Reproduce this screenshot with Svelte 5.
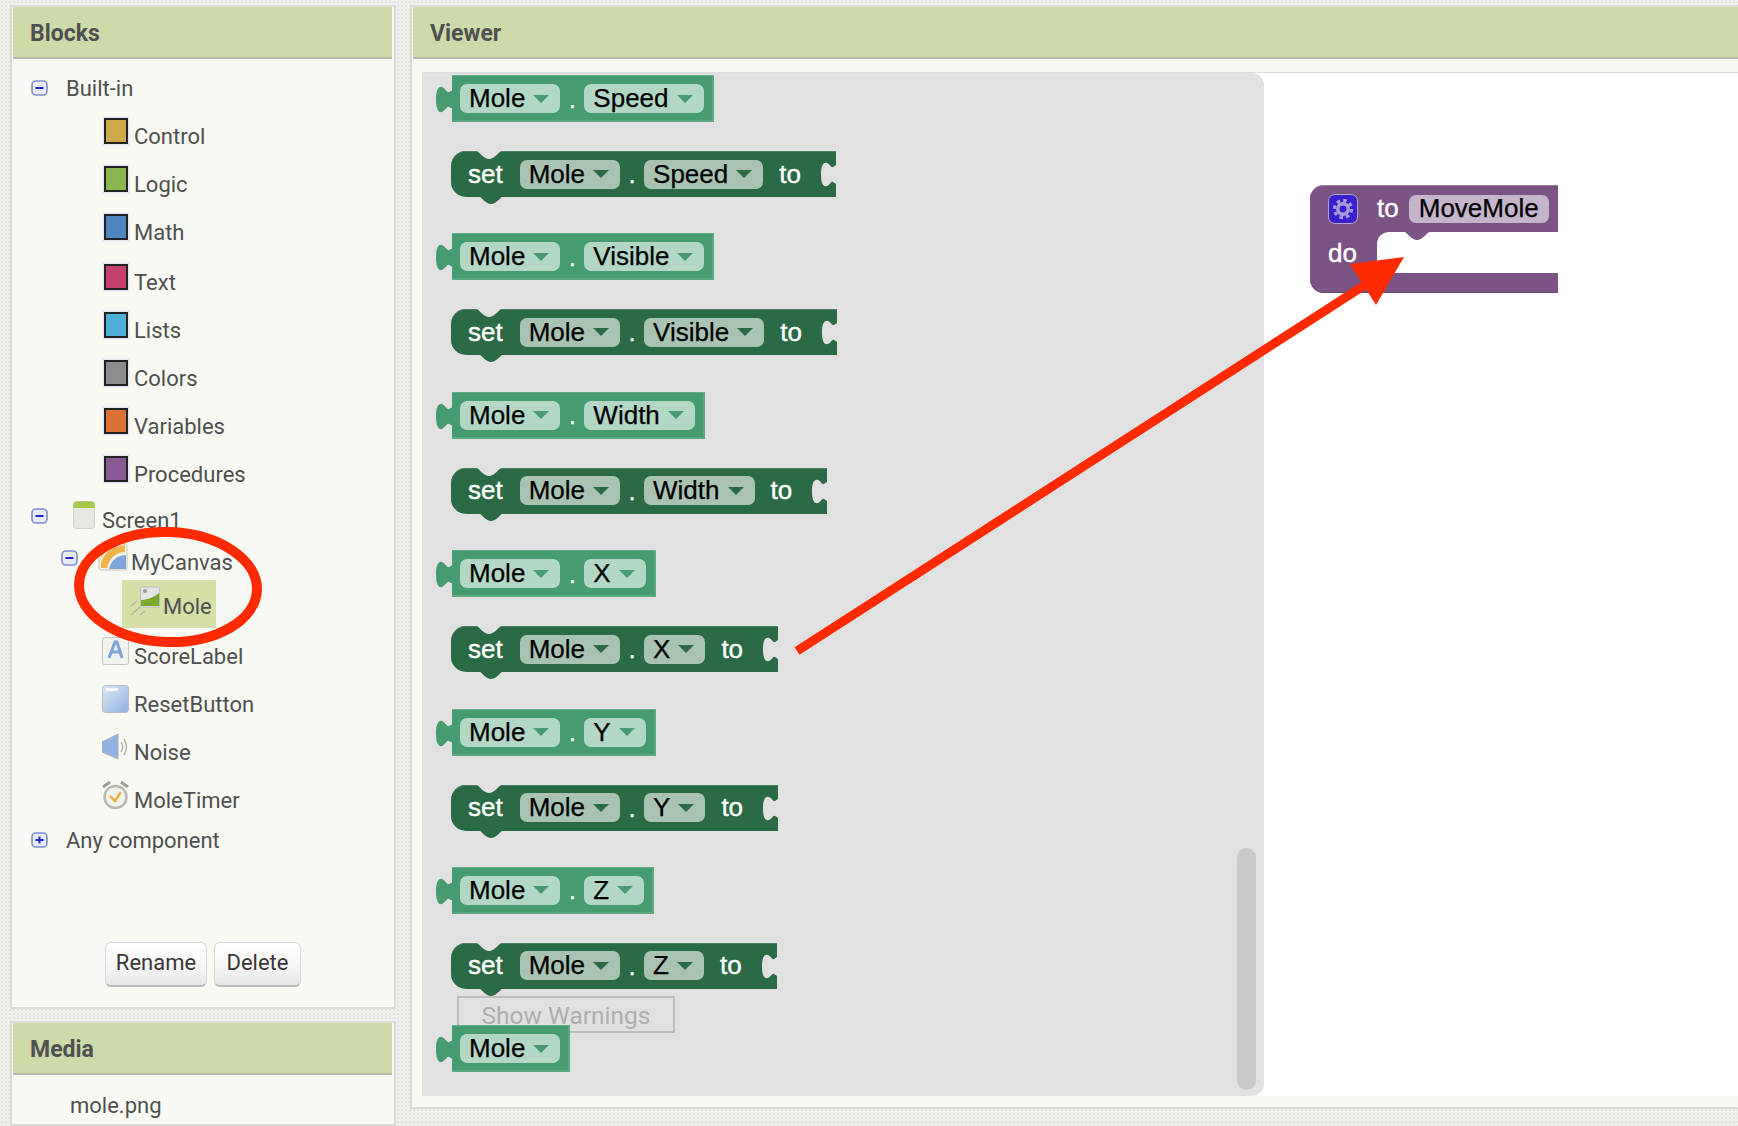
<script>
  const builtins = [
    { name: 'Control', color: '#cfa94a' },
    { name: 'Logic', color: '#8ab54f' },
    { name: 'Math', color: '#4f86c0' },
    { name: 'Text', color: '#c43f6e' },
    { name: 'Lists', color: '#4bafd8' },
    { name: 'Colors', color: '#8c8c8c' },
    { name: 'Variables', color: '#dc7134' },
    { name: 'Procedures', color: '#8a5a96' }
  ];
  const props = ['Speed', 'Visible', 'Width', 'X', 'Y', 'Z'];
</script>

{#snippet toggle(kind)}
  <svg class="toggle" width="17" height="16" viewBox="0 0 17 16">
    <rect x="1" y="1" width="15" height="14" rx="4" fill="#e8ebf8" stroke="#7f8bd0" stroke-width="1.6" />
    <path d="M4.5 8h8" stroke="#2323c8" stroke-width="2" />
    {#if kind === 'plus'}<path d="M8.5 4.5v7" stroke="#2323c8" stroke-width="2" />{/if}
  </svg>
{/snippet}

{#snippet field(text)}
  <span class="field">{text}<i class="caret"></i></span>
{/snippet}

{#snippet getter(prop)}
  <div class="block get">
    <svg class="tab" width="17" height="27" viewBox="0 0 17 27">
      <path d="M17 4 L13 6 C11 7 10 3 6 1 C2 0 0 5 0 13.5 C0 22 2 27 6 26 C10 24 11 20 13 21 L17 23 Z" fill="#469c70" />
    </svg>
    {@render field('Mole')}
    {#if prop}
      <span class="dot">.</span>
      {@render field(prop)}
    {/if}
  </div>
{/snippet}

{#snippet setter(prop)}
  <div class="block set">
    <svg class="notch" width="30" height="9" viewBox="0 0 30 9">
      <path d="M0 0 L3 0 C6 2 10 8 15 8 C20 8 24 2 27 0 L30 0 Z" fill="#e1e1e1" />
    </svg>
    <svg class="bump" width="30" height="9" viewBox="0 0 30 9">
      <path d="M0 0 L3 0 C6 2 10 8 15 8 C20 8 24 2 27 0 L30 0 Z" fill="#2a6a45" />
    </svg>
    <span class="word">set</span>
    {@render field('Mole')}
    <span class="dot">.</span>
    {@render field(prop)}
    <span class="word to">to</span>
    <svg class="socket" width="15" height="25" viewBox="0 0 15 25">
      <path d="M15 3 L12 5 C10 6 9 2 6 1 C2 0 0 4 0 12.5 C0 21 2 25 6 24 C9 23 10 19 12 20 L15 22 Z" fill="#e1e1e1" />
    </svg>
  </div>
{/snippet}

<div class="page">
  <div class="side">
    <section class="panel blocks">
      <h2>Blocks</h2>
      <div class="body">
        <div class="tree">
          <div class="row top">{@render toggle('minus')}<span class="lbl">Built-in</span></div>
          {#each builtins as b}
            <div class="row item">
              <span class="swatch" style="background:{b.color}"></span>
              <span class="lbl">{b.name}</span>
            </div>
          {/each}
          <div class="row top screen">
            {@render toggle('minus')}
            <svg class="ico" width="22" height="28" viewBox="0 0 22 28">
              <rect x=".5" y=".5" width="21" height="27" rx="3" fill="#e6e6e3" stroke="#cfcfcb" />
              <path d="M.5 7V3.500a3 3 0 0 1 3-3h15a3 3 0 0 1 3 3V7z" fill="#a6c64a" />
            </svg>
            <span class="lbl">Screen1</span>
          </div>
          <div class="row canvas">
            {@render toggle('minus')}
            <svg class="ico" width="30" height="28" viewBox="0 0 30 28">
              <rect x="1" y="1" width="28" height="26" rx="2" fill="#f3f0e2" stroke="#c9c9c9" />
              <path d="M3 19 C7 9 14 4 27 2 L27 9 C18 9 12 14 9 25 L3 25 Z" fill="#f0b34a" />
              <path d="M8 5 C4 7 3 11 3 15 C6 10 9 7 13 5 Z" fill="#a8c65a" />
              <path d="M11 26 C13 17 20 12 28 12 L28 26 Z" fill="#7fa6d8" />
            </svg>
            <span class="lbl">MyCanvas</span>
          </div>
          <div class="row mole">
            <svg class="ico" width="30" height="31" viewBox="0 0 30 31">
              <rect x="10.500" y="1" width="19" height="20" rx="1" fill="#e4e4e4" stroke="#bdbdbd" />
              <path d="M11 20 L11 14 C17 14 22 12 29 7 L29 20 Z" fill="#7aa92b" />
              <circle cx="15" cy="5" r="2" fill="#9a9a9a" />
              <path d="M1 20 L7 15 M1 29 L10 21 M10 29 L15 25" stroke="#b3b3a8" stroke-width="1.600" />
            </svg>
            <span class="lbl">Mole</span>
          </div>
          <div class="row item score">
            <svg class="ico" width="27" height="28" viewBox="0 0 27 28">
              <rect x=".5" y=".5" width="26" height="27" rx="2" fill="#f1f1ee" stroke="#c6c6c6" />
              <path d="M7 21 L13 5 L15 5 L20 21 M9 15 H18" fill="none" stroke="#7fa3d6" stroke-width="3" />
            </svg>
            <span class="lbl">ScoreLabel</span>
          </div>
          <div class="row item">
            <svg class="ico" width="27" height="28" viewBox="0 0 27 28">
              <defs>
                <linearGradient id="btn" x1="0" y1="0" x2="1" y2="1">
                  <stop offset="0" stop-color="#dfe9f8" />
                  <stop offset="1" stop-color="#8fb0e0" />
                </linearGradient>
              </defs>
              <rect x=".5" y=".5" width="26" height="27" rx="3" fill="url(#btn)" stroke="#b9bcc0" />
              <rect x="4" y="3" width="12" height="3" fill="#f4f7fc" />
            </svg>
            <span class="lbl">ResetButton</span>
          </div>
          <div class="row item">
            <svg class="ico" width="27" height="26" viewBox="0 0 27 26">
              <path d="M0 8 L16 0 V25 L0 18 Z" fill="#8fb2e2" stroke="#a7aeb8" />
              <path d="M19 8 C21 11 21 15 19 18 M22 5 C25 10 25 16 22 21" fill="none" stroke="#b5b5ad" stroke-width="1.500" />
            </svg>
            <span class="lbl">Noise</span>
          </div>
          <div class="row item">
            <svg class="ico" width="27" height="28" viewBox="0 0 27 28">
              <path d="M1 6 L8 1 M26 6 L19 1" stroke="#9b9b97" stroke-width="3" />
              <circle cx="13.500" cy="16" r="11" fill="#f2f2ec" stroke="#b9b9b3" stroke-width="2.500" />
              <path d="M8 15 L13 20 L19 11" fill="none" stroke="#ecb14a" stroke-width="2.500" />
            </svg>
            <span class="lbl">MoleTimer</span>
          </div>
          <div class="row top any">{@render toggle('plus')}<span class="lbl">Any component</span></div>
        </div>
        <div class="actions">
          <button class="rename">Rename</button>
          <button class="delete">Delete</button>
        </div>
      </div>
    </section>
    <section class="panel media">
      <h2>Media</h2>
      <div class="body"><span class="lbl file">mole.png</span></div>
    </section>
  </div>

  <section class="panel viewer">
    <h2>Viewer</h2>
    <div class="body">
      <div class="workspace">
        <div class="flyout">
          <button class="warnings">Show Warnings</button>
          {#each props as p}
            {@render getter(p)}
            {@render setter(p)}
          {/each}
          {@render getter(null)}
          <div class="scrollbar"></div>
        </div>

        <div class="proc">
          <div class="proc-head">
            <span class="gear">
              <svg width="24" height="24" viewBox="0 0 22 22">
                <circle cx="11" cy="11" r="7.800" fill="none" stroke="#a99bd8" stroke-width="3" stroke-dasharray="3.200 2.920" />
                <circle cx="11" cy="11" r="4.800" fill="none" stroke="#a99bd8" stroke-width="3.200" />
              </svg>
            </span>
            <span class="word">to</span>
            <span class="name">MoveMole</span>
          </div>
          <span class="word do">do</span>
          <div class="slot">
            <svg class="slot-notch" width="30" height="9" viewBox="0 0 30 9">
              <path d="M0 0 L3 0 C6 2 10 8 15 8 C20 8 24 2 27 0 L30 0 Z" fill="#7c5385" />
            </svg>
          </div>
        </div>
      </div>
    </div>
  </section>

  <svg class="marks" width="1738" height="1126" viewBox="0 0 1738 1126">
    <ellipse cx="168" cy="587" rx="89" ry="55" fill="none" stroke="#ff2a00" stroke-width="10" transform="rotate(2 168 587)" />
    <path d="M797 651 L1368 283" stroke="#ff2a00" stroke-width="9" />
    <path d="M1404 257 L1350 264 L1376 305 Z" fill="#ff2a00" />
  </svg>
</div>

<style>
  :global(body) {
    margin: 0;
    background: #eeeeeb;
  }

  .page {
    position: relative;
    width: 1738px;
    height: 1126px;
    overflow: hidden;
    display: flex;
    gap: 14px;
    padding: 5px 0 0 10px;
    box-sizing: border-box;
    font-family: Roboto, "Liberation Sans", sans-serif;
    color: #4f4f4f;
    background-color: #eeeeeb;
    background-image: radial-gradient(#e3e3e0 1px, transparent 1.2px);
    background-size: 4px 4px;
  }

  .side {
    width: 386px;
    flex: none;
    display: flex;
    flex-direction: column;
    gap: 12px;
  }

  .panel {
    box-sizing: border-box;
    background: #f8f9f3;
    border: 2px solid #d9d9d6;
    display: flex;
    flex-direction: column;
  }

  h2 {
    flex: none;
    margin: 0 2px 0 1px;
    height: 52px;
    box-sizing: border-box;
    padding: 2px 0 0 17px;
    display: flex;
    align-items: center;
    background: #cddba9;
    border-bottom: 2px solid #b8b9a8;
    font-size: 23px;
    font-weight: 700;
    color: #505050;
  }

  .blocks {
    height: 1004px;
    flex: none;
  }

  .blocks .body {
    flex: 1;
    display: flex;
    flex-direction: column;
  }

  .tree {
    padding-top: 5px;
  }

  .row {
    height: 48px;
    display: flex;
    align-items: center;
  }

  .lbl {
    font-size: 22px;
    white-space: nowrap;
  }

  .toggle {
    flex: none;
  }

  .top {
    padding-left: 19px;
  }

  .top > .lbl {
    margin-left: 18px;
  }

  .item {
    padding-left: 90px;
  }

  .item:nth-child(5) {
    margin-top: 2px;
  }

  .item .lbl {
    margin-left: 5px;
  }

  .swatch {
    width: 20px;
    height: 22px;
    margin: 0 0 10px 2px;
    border: 2px solid #222;
    box-shadow: 0 0 0 1.500px #e4e7f3;
  }

  .ico {
    flex: none;
    margin-bottom: 10px;
  }

  .item .swatch + .lbl {
    margin-left: 6px;
  }

  .screen {
    margin-top: -2px;
  }

  .screen .toggle,
  .canvas .toggle {
    margin-bottom: 8px;
  }

  .screen .ico {
    margin-left: 25px;
  }

  .top.screen .lbl {
    margin-left: 7px;
  }

  .canvas {
    height: 36px;
    padding-left: 49px;
  }

  .canvas .ico {
    margin-left: 20px;
  }

  .canvas .lbl {
    margin-left: 3px;
  }

  .mole {
    margin-left: 110px;
    width: 94px;
    box-sizing: border-box;
    padding: 4px 0 0 8px;
    background: #d5e0a6;
  }

  .mole .lbl {
    margin-left: 3px;
  }

  .score {
    margin-top: 4px;
  }

  .any {
    height: 32px;
  }

  .actions {
    margin-top: auto;
    padding-bottom: 20px;
    display: flex;
    justify-content: center;
    gap: 7px;
  }

  button {
    font-family: Roboto, "Liberation Sans", sans-serif;
  }

  .actions button {
    height: 45px;
    padding: 0 0 3px;
    font-size: 22px;
    color: #3b3535;
    border: 1px solid #d8d8d8;
    border-bottom: 2px solid #b9b9b9;
    border-radius: 6px;
    background: linear-gradient(#ffffff, #f6f6f6 55%, #e6e6e6);
  }

  .rename {
    width: 102px;
  }

  .delete {
    width: 87px;
  }

  .media {
    flex: 1;
  }

  .file {
    display: block;
    padding: 18px 0 0 58px;
  }

  .viewer {
    flex: none;
    width: 1340px;
    height: 1104px;
  }

  .viewer .body {
    flex: 1;
    min-height: 0;
    padding: 13px 0 11px 10px;
    display: flex;
  }

  .workspace {
    position: relative;
    flex: 1;
    background: #fff;
    border-top: 1px solid #dcdcdc;
  }

  .flyout {
    position: relative;
    width: 842px;
    height: 100%;
    box-sizing: border-box;
    padding: 2px 0 0 30px;
    background: #e1e1e1;
    border-radius: 0 12px 12px 0;
    overflow: hidden;
  }

  .block {
    position: relative;
    width: max-content;
    display: flex;
    align-items: center;
    font-family: "Liberation Sans", Arial, sans-serif;
    font-size: 26px;
    color: #000;
    -webkit-text-stroke: 0.25px currentColor;
  }

  .get {
    height: 47px;
    margin-bottom: 29px;
    padding: 0 10px 0 8px;
    background: #469c70;
    box-shadow: inset 0 1px #62ad87, inset 0 -2px #5aa880, inset -2px 0 #5aa880;
  }

  .set {
    height: 46px;
    margin-bottom: 36.400px;
    margin-left: -1px;
    padding: 0 35px 0 17px;
    background: #2a6a45;
    border-radius: 15px 0 0 15px;
    box-shadow: inset 0 1px #4b8163;
  }

  .tab {
    position: absolute;
    left: -16px;
    top: 11px;
  }

  .notch {
    position: absolute;
    left: 23px;
    top: 0;
  }

  .bump {
    position: absolute;
    left: 25px;
    bottom: -8px;
  }

  .socket {
    position: absolute;
    right: 0;
    top: 11px;
  }

  .field {
    height: 29px;
    display: flex;
    align-items: center;
    padding: 0 11px 0 9px;
    border-radius: 7px;
  }

  .get .field {
    background: #b3d7c5;
  }

  .set .field {
    background: #a9c3b3;
  }

  .caret {
    width: 0;
    height: 0;
    margin-left: 8px;
    border: 8.500px solid transparent;
    border-bottom: 0;
    border-top-width: 8px;
    border-top-color: #469c70;
  }

  .set .caret {
    border-top-color: #2a6a45;
  }

  .dot {
    width: 24px;
    text-align: center;
    color: #fff;
    margin-top: 1px;
  }

  .word {
    font-family: "Liberation Sans", Arial, sans-serif;
    color: #fff;
    -webkit-text-stroke: 0.4px #fff;
  }

  .set .word {
    margin-right: 17px;
  }

  .set .to {
    margin: 0 0 0 16px;
  }

  .warnings {
    position: absolute;
    left: 35px;
    top: 923px;
    width: 218px;
    height: 37px;
    padding: 2px 0 0;
    font-size: 24.500px;
    color: #aeaeae;
    background: transparent;
    border: 2px solid #bdbdbd;
  }

  .scrollbar {
    position: absolute;
    left: 815px;
    top: 775px;
    width: 19px;
    height: 242px;
    border-radius: 10px;
    background: #c9c9c9;
  }

  .proc {
    position: absolute;
    left: 888px;
    top: 112px;
    width: 248px;
    height: 108px;
    box-sizing: border-box;
    font-family: "Liberation Sans", Arial, sans-serif;
    font-size: 26px;
    background: #7c5385;
    border-radius: 14px 0 0 14px;
    box-shadow: inset 0 1px #9a7aa2, inset 0 -1px #694670;
  }

  .proc-head {
    height: 47px;
    display: flex;
    align-items: center;
    padding-left: 18px;
  }

  .gear {
    width: 30px;
    height: 30px;
    box-sizing: border-box;
    display: flex;
    align-items: center;
    justify-content: center;
    background: #3a1fcf;
    border: 1px solid #b5a5c5;
    border-radius: 7px;
    margin-right: 19px;
  }

  .name {
    margin-left: 10px;
    height: 28px;
    width: 140px;
    display: flex;
    align-items: center;
    justify-content: center;
    border-radius: 7px;
    background: #c5b4cb;
    color: #000;
    -webkit-text-stroke: 0.25px #000;
  }

  .do {
    position: absolute;
    left: 18px;
    top: 53px;
  }

  .slot {
    position: absolute;
    left: 67px;
    right: 0;
    top: 47px;
    height: 41px;
    background: #fff;
    border-radius: 12px 0 0 0;
  }

  .slot-notch {
    position: absolute;
    left: 25px;
    top: 0;
  }

  .marks {
    position: absolute;
    left: 0;
    top: 0;
    pointer-events: none;
  }
</style>
